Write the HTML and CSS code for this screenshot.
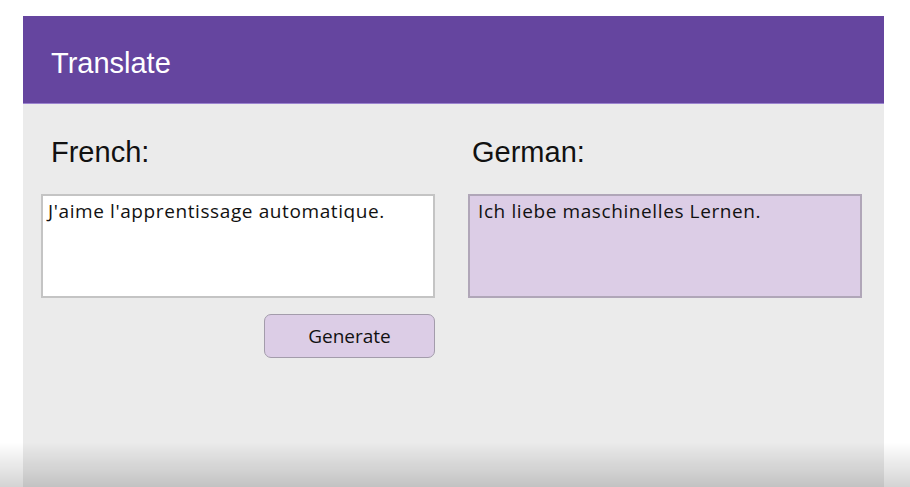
FILE: index.html
```html
<!DOCTYPE html>
<html>
<head>
<meta charset="utf-8">
<title>Translate</title>
<link rel="stylesheet" href="styles.css">
</head>
<body>
<div class="panel">
  <div class="header">Translate</div>
  <div class="content">
    <div class="col">
      <div class="label label-left">French:</div>
      <div class="box box-input">J'aime l'apprentissage automatique.</div>
      <div class="actions"><button class="btn">Generate</button></div>
    </div>
    <div class="col">
      <div class="label label-right">German:</div>
      <div class="box box-output">Ich liebe maschinelles Lernen.</div>
    </div>
  </div>
</div>
<div class="shade"></div>
</body>
</html>
```

FILE: styles.css
```css
html, body {
  margin: 0;
  padding: 0;
  background: #ffffff;
  height: 100%;
  overflow: hidden;
}
body {
  padding-top: 16px;
  box-sizing: border-box;
}
.panel {
  margin-left: 23px;
  width: 861px;
  height: 471px;
  background: #ebebeb;
}
.header {
  box-sizing: border-box;
  height: 88px;
  padding: 30px 0 0 28px;
  background: #65459f;
  border-bottom: 1px solid #9b83cf;
  color: #ffffff;
  font-family: "Liberation Sans", Arial, sans-serif;
  font-size: 29px;
  line-height: 34px;
}
.content {
  display: grid;
  grid-template-columns: 1fr 1fr;
  column-gap: 33px;
  padding: 32px 22px 0 18px;
}
.label {
  font-family: "Liberation Sans", Arial, sans-serif;
  font-size: 29px;
  line-height: 32px;
  color: #111111;
  margin-bottom: 26px;
}
.label-left { padding-left: 10px; }
.label-right { padding-left: 4px; }
.box {
  box-sizing: border-box;
  height: 104px;
  font-family: "Open Sans", "Noto Sans", sans-serif;
  font-size: 19px;
  line-height: 24px;
  letter-spacing: 0.6px;
  color: #111111;
}
.box-input {
  background: #ffffff;
  border: 2px solid #c4c4c4;
  padding: 3px 0 0 5px;
}
.box-output {
  background: #dccde6;
  border: 2px solid #b0a6b8;
  padding: 3px 0 0 8px;
}
.actions {
  display: flex;
  justify-content: flex-end;
  margin-top: 16px;
}
.btn {
  box-sizing: border-box;
  width: 171px;
  height: 44px;
  background: #dccde6;
  border: 1.5px solid #a39cab;
  border-radius: 7px;
  font-family: "Open Sans", "Noto Sans", sans-serif;
  font-size: 19px;
  color: #111111;
  padding: 0;
}
.shade {
  position: fixed;
  left: 0;
  right: 0;
  bottom: 0;
  height: 45px;
  background: linear-gradient(to bottom, rgba(0,0,0,0), rgba(0,0,0,0.17));
  pointer-events: none;
}
```
